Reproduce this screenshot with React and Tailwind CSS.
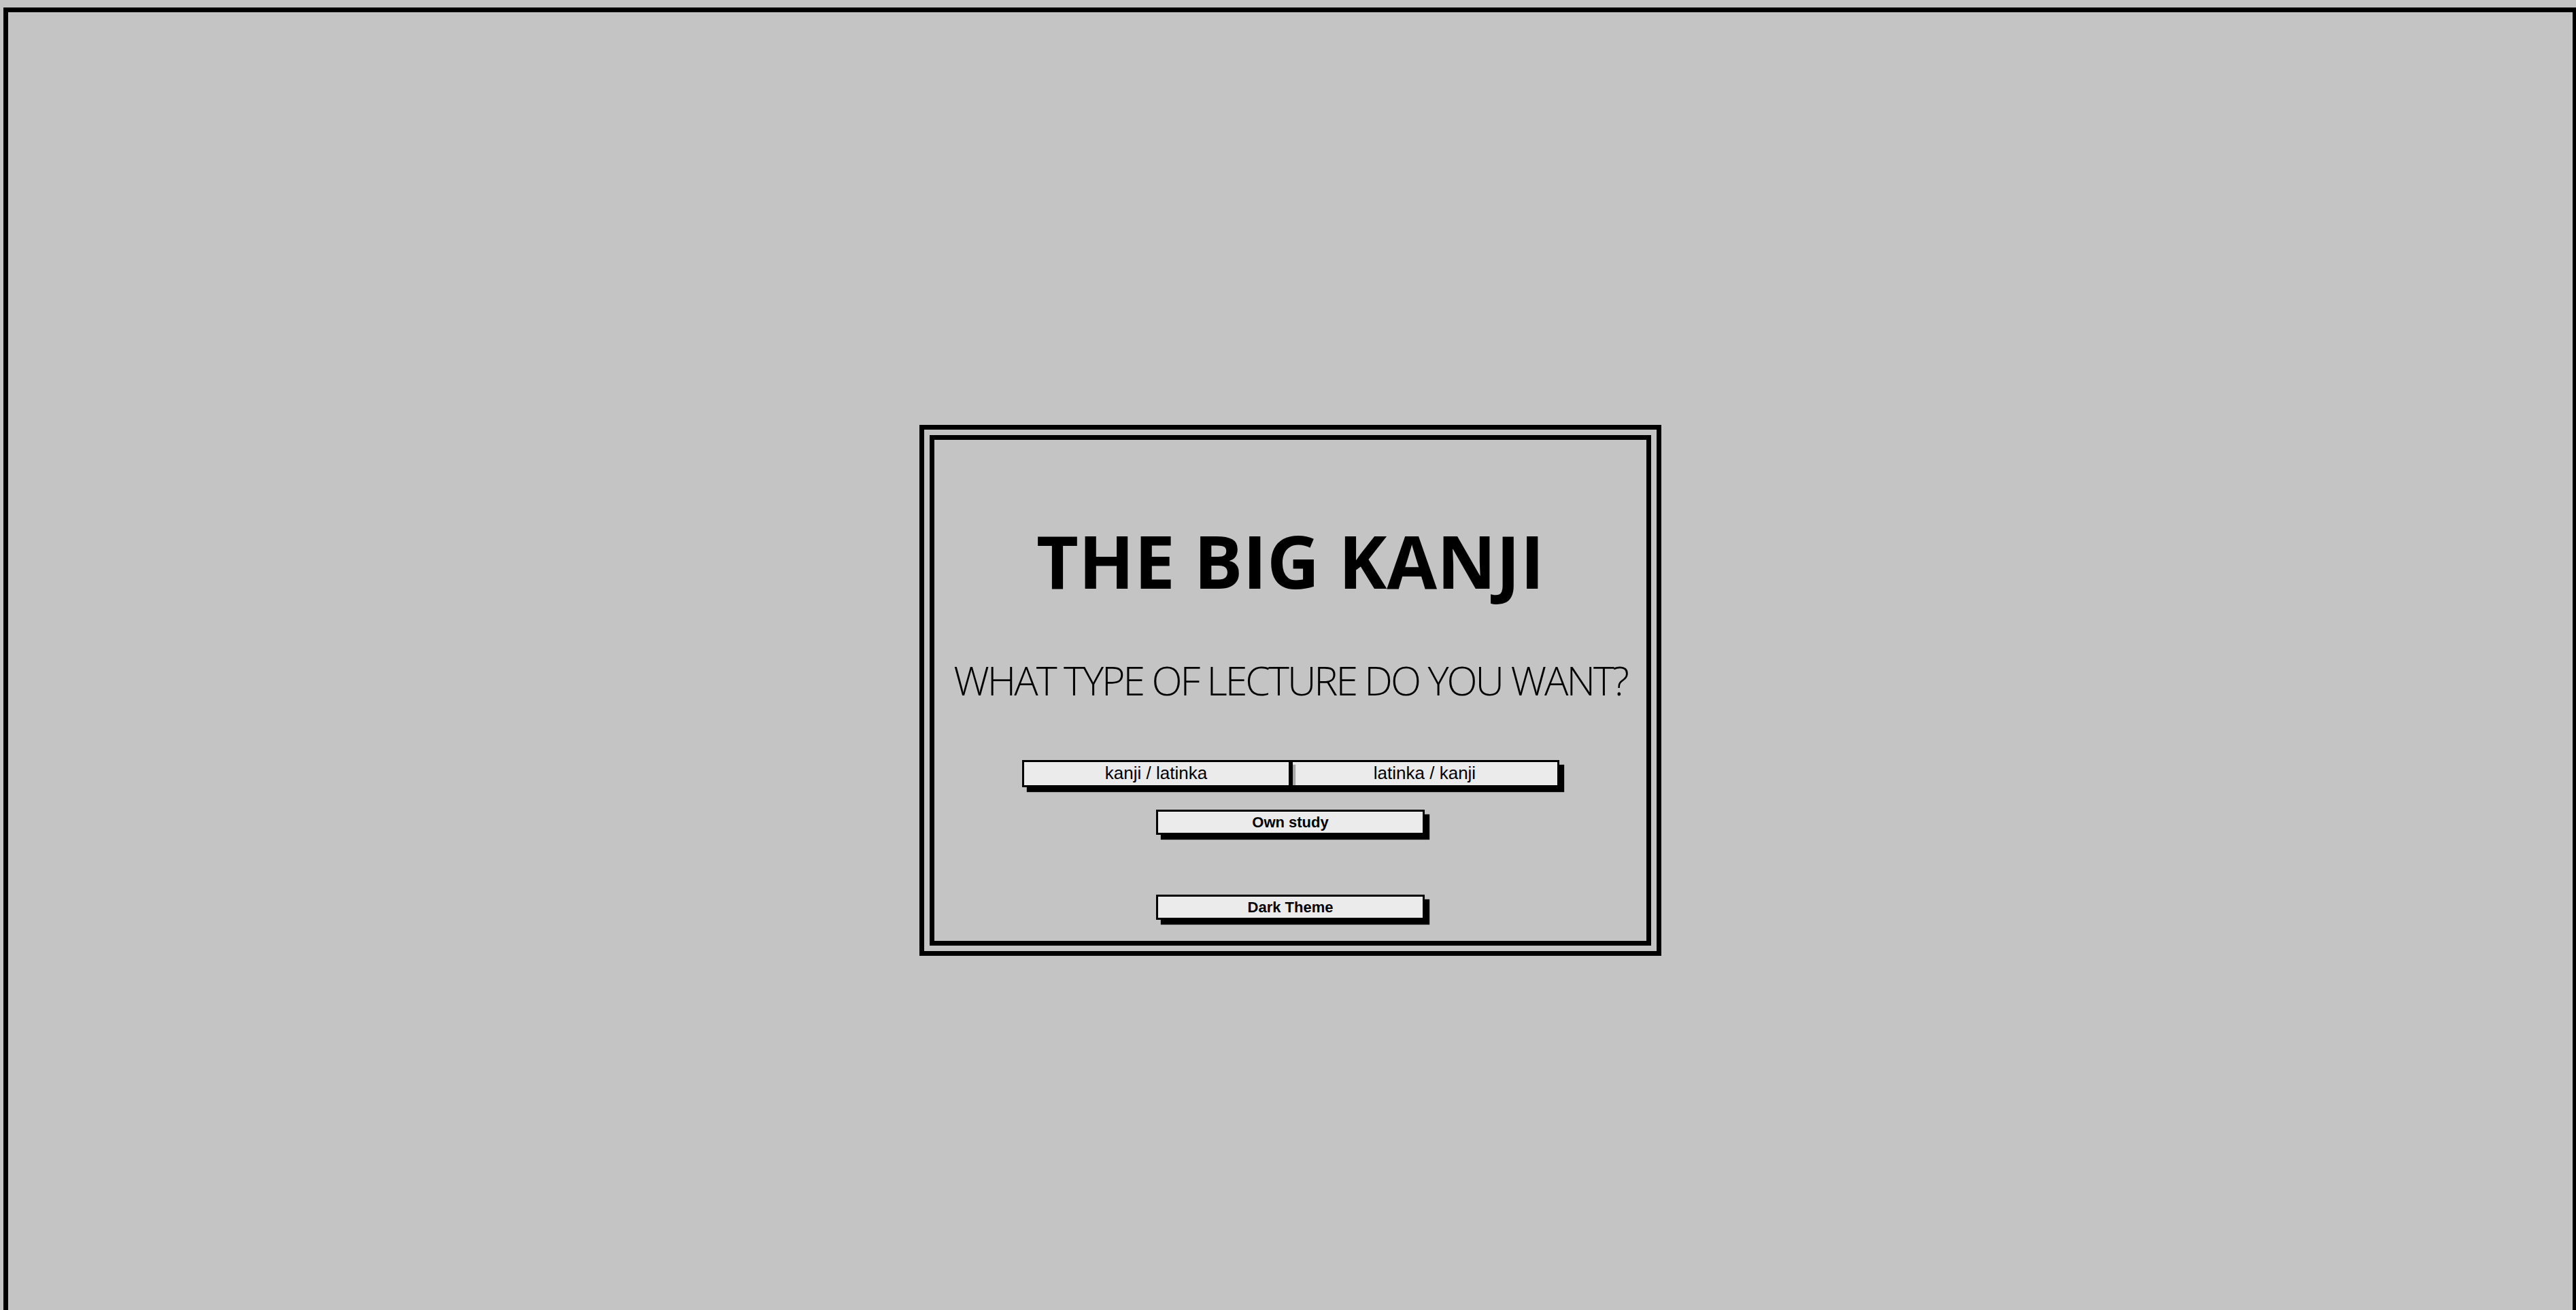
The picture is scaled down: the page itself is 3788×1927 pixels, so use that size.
import React from 'react';

const btn =
    'flex items-center justify-center border-[3px] border-black bg-[rgba(255,255,255,0.66)] text-black shadow-[7px_7px_1px_#000] font-["Liberation_Sans",Arial,sans-serif]';

const App = () => {
    return (
        <div className="h-screen w-full overflow-hidden bg-[#c4c4c4] pt-[11px] pl-[5px]">
            <div className="flex h-[2008px] w-[3785px] items-center justify-center border-[7px] border-black">
                <div className="border-[7px] border-black p-[8px]">
                    <div className="flex h-[751px] w-[1061px] flex-col items-center border-[7px] border-black font-['Open_Sans','Noto_Sans',sans-serif] text-black">
                        <h1 className="mt-[124px] text-[107px] font-bold leading-none">THE BIG KANJI</h1>
                        <h2 className="mt-[93px] whitespace-nowrap text-[59px] font-light leading-none tracking-[-3px]">
                            WHAT TYPE OF LECTURE DO YOU WANT?
                        </h2>

                        <div className="mt-[88px] flex">
                            <button className={`${btn} h-[40px] w-[395px] text-[26px]`}>kanji / latinka</button>
                            <button className={`${btn} h-[40px] w-[395px] text-[26px]`}>latinka / kanji</button>
                        </div>
                        <button className={`${btn} mt-[33px] h-[37px] w-[395px] text-[22px] font-bold`}>Own study</button>

                        <button className={`${btn} mt-[88px] h-[37px] w-[395px] text-[22px] font-bold`}>Dark Theme</button>
                    </div>
                </div>
            </div>
        </div>
    );
};

export default App;
